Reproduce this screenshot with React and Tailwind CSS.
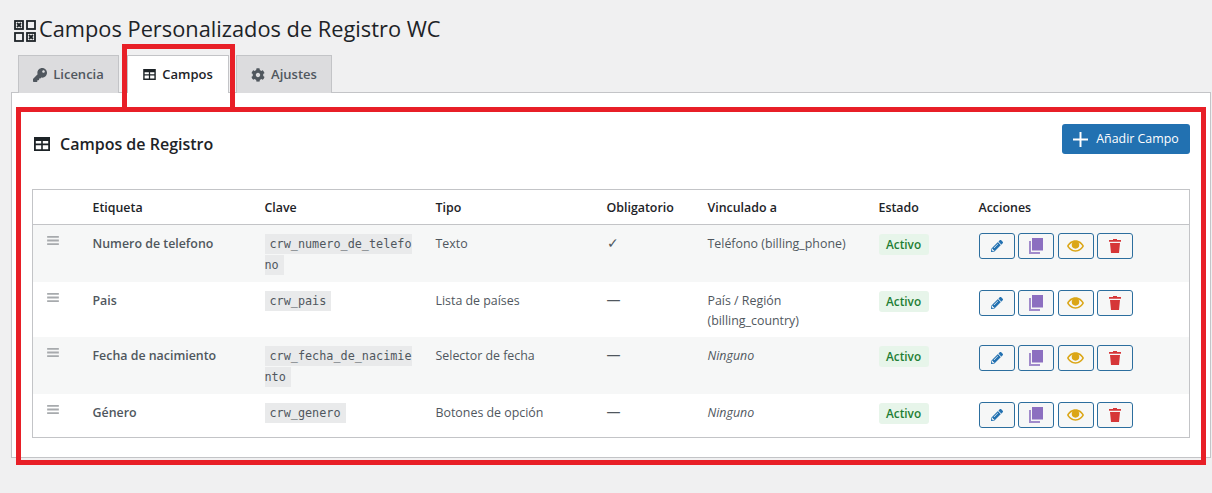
import React from "react";
import { FaKey, FaCog, FaPencilAlt } from "react-icons/fa";

const rows = [
  {
    label: "Numero de telefono",
    key1: "crw_numero_de_telefono",
    type: "Texto",
    required: "✓",
    linked: "Teléfono (billing_phone)",
  },
  {
    label: "Pais",
    key1: "crw_pais",
    type: "Lista de países",
    required: "—",
    linked: "País / Región (billing_country)",
  },
  {
    label: "Fecha de nacimiento",
    key1: "crw_fecha_de_nacimiento",
    type: "Selector de fecha",
    required: "—",
    linked: "Ninguno",
    empty: true,
  },
  {
    label: "Género",
    key1: "crw_genero",
    type: "Botones de opción",
    required: "—",
    linked: "Ninguno",
    empty: true,
  },
];

function TableIcon({ className }) {
  return (
    <svg viewBox="0 0 16 14" className={className} fill="currentColor">
      <path
        fillRule="evenodd"
        d="M0 0h16v14H0zM1.800 4v2.600h5.400V4zm7 0v2.600h5.400V4zM1.800 8.200v4h5.400v-4zm7 0v4h5.400v-4z"
      />
    </svg>
  );
}

function GridLogo() {
  return (
    <svg viewBox="0 0 22 22" className="mt-[5px] ml-[3px] h-[22px] w-[22px] shrink-0 text-[#1d2327]" fill="none" stroke="currentColor" strokeWidth="1.800">
      <rect x="1" y="1" width="8" height="8" />
      <path d="M3 3l4 4M7 3l-4 4" />
      <rect x="13" y="1" width="8" height="8" />
      <rect x="1" y="13" width="8" height="8" />
      <rect x="13" y="13" width="8" height="8" />
      <path d="M15 15l4 4M19 15l-4 4" />
    </svg>
  );
}

function Handle() {
  return (
    <svg viewBox="0 0 13 10" className="mt-[3px] ml-[14px] h-[9px] w-[12px] text-[#a7aaad]" fill="currentColor">
      <path d="M0 0h13v2H0zM0 4h13v2H0zM0 8h13v2H0z" />
    </svg>
  );
}

function ActionButton({ children }) {
  return (
    <button className="flex h-[26px] w-[36px] items-center justify-center rounded-[3px] border border-[#2c6e9e] bg-[#f6f7f7]">
      {children}
    </button>
  );
}

function Actions() {
  return (
    <div className="flex gap-[3.500px]">
      <ActionButton>
        <FaPencilAlt className="h-[12px] w-[12px] text-[#2271b1]" />
      </ActionButton>
      <ActionButton>
        <svg viewBox="0 0 14 16" className="h-4 w-[14px]" fill="#8c6fc0">
          <path d="M3 0h11v12.500H3z" />
          <path d="M0 3h2v11h9v2H0z" fill="#a18bcb" />
        </svg>
      </ActionButton>
      <ActionButton>
        <svg viewBox="0 0 18 12" className="h-3 w-[17px]" fill="#dba617">
          <path
            fillRule="evenodd"
            d="M9 0c4 0 7.300 2.500 9 6-1.700 3.500-5 6-9 6S1.700 9.500 0 6c1.700-3.500 5-6 9-6zM1.800 6C3.300 8.600 6 10.500 9 10.500S14.700 8.600 16.200 6C15.200 4.300 13.700 3 12 2.200c.6.700 1 1.600 1 2.600a4 4 0 0 1-8 0c0-1 .4-1.900 1-2.600C4.300 3 2.800 4.300 1.800 6z"
          />
        </svg>
      </ActionButton>
      <ActionButton>
        <svg viewBox="0 0 12 14" className="h-[14px] w-3" fill="#d63638">
          <path d="M4 0h4v1h4v1.800H0V1h4zM1 4h10l-1 10H2z" />
        </svg>
      </ActionButton>
    </div>
  );
}

function Tab({ active, className, children }) {
  return (
    <div
      className={`-mb-px flex h-[38px] items-center justify-center gap-[6px] border border-b-0 border-[#c3c4c7] text-[13px] font-semibold ${
        active
          ? "z-10 bg-white text-[#1d2327]"
          : "bg-[#dcdcde] text-[#50575e]"
      } ${className}`}
    >
      {children}
    </div>
  );
}

export default function App() {
  return (
    <div
      className="relative h-[493px] w-[1212px] overflow-hidden bg-[#f0f0f1] text-[12.4px] text-[#50575e]"
      style={{ fontFamily: '"Open Sans", sans-serif' }}
    >
      <div className="pt-[15px] pl-[11px]">
        <h1 className="flex h-[28px] items-start gap-[3px] text-[21.800px] leading-7 font-normal text-[#1d2327]">
          <GridLogo />
          Campos Personalizados de Registro WC
        </h1>

        <div className="mt-[12px] ml-[7px] flex">
          <Tab className="w-[101px]">
            <FaKey className="h-[14px] w-[14px]" />
            Licencia
          </Tab>
          <Tab active className="ml-[8px] w-[102px]">
            <TableIcon className="h-[11px] w-[13px]" />
            Campos
          </Tab>
          <Tab className="ml-[7px] w-[96px]">
            <FaCog className="h-[14px] w-[14px]" />
            Ajustes
          </Tab>
        </div>

        <div className="h-[366px] w-[1200px] border border-[#c3c4c7] bg-white px-5 pt-[31px]">
          <div className="flex items-start justify-between">
            <h2 className="mt-[8px] flex items-center gap-[10px] pl-[2px] text-[16px] font-semibold text-[#1d2327]">
              <TableIcon className="h-[14px] w-4" />
              Campos de Registro
            </h2>
            <button className="flex h-[30px] w-[128px] items-center justify-center gap-[8px] rounded-[3px] bg-[#2271b1] text-white">
              <svg viewBox="0 0 16 16" className="h-[15px] w-[15px]" fill="none" stroke="white" strokeWidth="2.100">
                <path d="M8 0v16M0 8h16" />
              </svg>
              Añadir Campo
            </button>
          </div>

          <table className="mt-[33px] w-[1158px] table-fixed border border-[#c3c4c7] text-left">
            <colgroup>
              <col className="w-[50px]" />
              <col className="w-[172px]" />
              <col className="w-[171px]" />
              <col className="w-[171px]" />
              <col className="w-[101px]" />
              <col className="w-[171px]" />
              <col className="w-[100px]" />
              <col />
            </colgroup>
            <thead>
              <tr className="h-[35px] border-b border-[#c3c4c7] text-[#1d2327]">
                <th />
                {["Etiqueta", "Clave", "Tipo", "Obligatorio", "Vinculado a", "Estado", "Acciones"].map((title) => (
                  <th key={title} className="px-[10px] pt-[2px] font-semibold">
                    {title}
                  </th>
                ))}
              </tr>
            </thead>
            <tbody>
              {rows.map((row, i) => (
                <tr key={row.key1} className={i % 2 === 0 ? "bg-[#f6f7f7]" : "bg-white"}>
                  <td className="px-0 pt-[8px] align-top">
                    <Handle />
                  </td>
                  <td className="px-[10px] pt-[9px] align-top leading-[20px] font-semibold">{row.label}</td>
                  <td className="px-[10px] pt-[8px] pb-[7px] align-top leading-[21px]">
                    <code
                      className="bg-[#e9eaeb] px-[5px] py-[3px] leading-none break-all"
                      style={{ fontFamily: '"DejaVu Sans Mono", monospace', fontSize: "11.800px" }}
                    >
                      {row.key1}
                    </code>
                  </td>
                  <td className="px-[10px] pt-[9px] align-top leading-[20px]">{row.type}</td>
                  <td className="px-[10px] pt-[8px] align-top text-[14px] leading-[20px]">{row.required}</td>
                  <td className={`px-[10px] pt-[9px] pb-[6px] align-top leading-[20px] ${row.empty ? "italic" : ""}`}>{row.linked}</td>
                  <td className="px-[10px] pt-[9px] align-top">
                    <span className="inline-block h-[21px] rounded-[3px] bg-[#e7f5ea] px-[7.500px] text-[11.800px] leading-[21px] font-semibold text-[#1e7e34]">
                      Activo
                    </span>
                  </td>
                  <td className="px-[10px] pt-[8px] pb-[9px] align-top">
                    <Actions />
                  </td>
                </tr>
              ))}
            </tbody>
          </table>
        </div>
      </div>

      {/* red annotation boxes drawn over the screenshot */}
      <div className="absolute top-[44px] left-[122px] h-[64px] w-[113px] border-[5px] border-b-0 border-[#e81f27]" />
      <div className="absolute top-[107px] left-[16px] h-[358px] w-[1190px] border-[5px] border-[#e81f27]" />
    </div>
  );
}
